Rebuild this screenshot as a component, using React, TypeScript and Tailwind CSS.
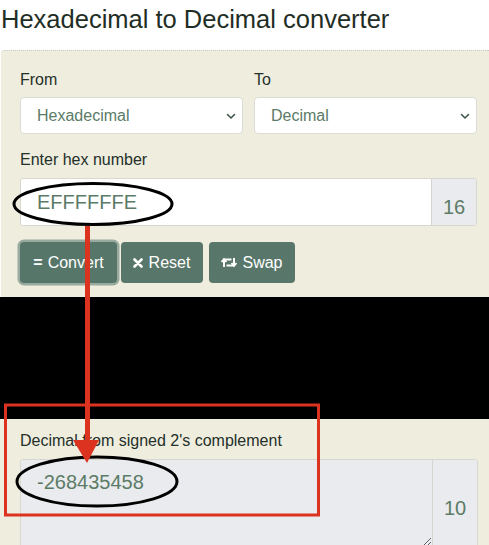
import React from "react";

const font = { fontFamily: '"Liberation Sans", Arial, sans-serif' };

function Chevron() {
  return (
    <svg width="10" height="8" viewBox="0 0 10 8" className="shrink-0">
      <path d="M1.5 2.5 L5 6 L8.5 2.5" fill="none" stroke="#3d5a48" strokeWidth="1.6" strokeLinecap="round" strokeLinejoin="round" />
    </svg>
  );
}

function XIcon() {
  return (
    <svg width="10" height="10" viewBox="0 0 10 10">
      <path d="M1.5 1.5 L8.5 8.5 M8.5 1.5 L1.5 8.5" stroke="white" strokeWidth="2.6" strokeLinecap="round" />
    </svg>
  );
}

function SwapIcon() {
  return (
    <svg width="16" height="11" viewBox="0 0 16 11">
      <path d="M3 10 V2.5 H10.5" fill="none" stroke="white" strokeWidth="2" />
      <path d="M0.5 5 L3 2.2 L5.5 5" fill="none" stroke="white" strokeWidth="1.8" />
      <path d="M13 1 V8.5 H5.5" fill="none" stroke="white" strokeWidth="2" />
      <path d="M10.5 6 L13 8.8 L15.5 6" fill="none" stroke="white" strokeWidth="1.8" />
    </svg>
  );
}

export default function App() {
  return (
    <div className="relative w-[489px] h-[545px] overflow-hidden bg-white" style={font}>
      <h1 className="text-[25.5px] leading-[28px] text-[#1f2e25] pt-[5px] pl-[1px] h-[50px]">
        Hexadecimal to Decimal converter
      </h1>
      <div className="bg-[#efedde] border-t border-dotted border-[#c9c9c0] rounded-tl-[4px] ml-[1px]">
        <div className="pl-[19px] pr-[12px] pt-[17px] pb-[14px]">
          <div className="flex gap-[11px]">
            <div className="w-[223px]">
              <div className="text-[16px] leading-[24px] text-[#24302a] mb-[5px]">From</div>
              <div className="h-[37px] bg-white border border-[#dcdcd6] rounded-[4px] flex items-center justify-between pl-[16px] pr-[6px]">
                <span className="text-[16px] text-[#5b7b67]">Hexadecimal</span>
                <Chevron />
              </div>
            </div>
            <div className="w-[223px]">
              <div className="text-[16px] leading-[24px] text-[#24302a] mb-[5px]">To</div>
              <div className="h-[37px] bg-white border border-[#dcdcd6] rounded-[4px] flex items-center justify-between pl-[16px] pr-[6px]">
                <span className="text-[16px] text-[#5b7b67]">Decimal</span>
                <Chevron />
              </div>
            </div>
          </div>
          <div className="text-[16px] leading-[24px] text-[#24302a] mt-[14px] mb-[6px]">Enter hex number</div>
          <div className="flex w-[457px] h-[48px] border border-[#d8d8d2] rounded-[3px] overflow-hidden">
            <div className="flex-1 bg-white flex items-center pl-[16px] text-[20px] text-[#5b7b67]">EFFFFFFE</div>
            <div className="w-[45px] bg-[#e9ebee] border-l border-[#d6d6d0] flex items-center justify-center pt-[10px] text-[20px] text-[#5b7b67]">
              16
            </div>
          </div>
          <div className="flex items-center mt-[16px]">
            <button className="w-[97px] h-[41px] rounded-[4px] bg-[#57766a] text-white text-[16px] flex items-center justify-center gap-[5px] shadow-[0_0_0_2.5px_#98ab9e]">
              <span className="font-bold leading-none">=</span>Convert
            </button>
            <button className="ml-[4px] w-[82px] h-[41px] rounded-[4px] bg-[#58776a] text-white text-[16px] flex items-center justify-center gap-[6px] pr-[1px]">
              <XIcon />Reset
            </button>
            <button className="ml-[6px] w-[86px] h-[41px] rounded-[4px] bg-[#58776a] text-white text-[16px] flex items-center justify-center gap-[5px]">
              <SwapIcon />Swap
            </button>
          </div>
        </div>
      </div>
      <div className="h-[122px] bg-black" />
      <div className="bg-[#efedde] h-[200px] pl-[20px] pt-[10px]">
        <div className="text-[16px] leading-[24px] text-[#24302a] mb-[6px]">Decimal from signed 2's complement</div>
        <div className="flex w-[458px] h-[88px] border border-[#d8d8d2] rounded-[3px] overflow-hidden">
          <textarea
            readOnly
            value="-268435458"
            className="flex-1 bg-[#e9ebee] pl-[16px] pt-[10px] text-[20px] leading-[24px] text-[#5b7b67] outline-none resize-y"
            style={font}
          />
          <div className="w-[45px] bg-[#e9ebee] border-l border-[#d6d6d0] flex items-center justify-center pt-[10px] text-[20px] text-[#5b7b67]">
            10
          </div>
        </div>
      </div>
      <svg className="absolute inset-0 pointer-events-none" width="489" height="545" viewBox="0 0 489 545">
        <ellipse cx="93" cy="204" rx="79" ry="20.5" fill="none" stroke="black" strokeWidth="3" />
        <ellipse cx="97" cy="481.5" rx="80" ry="24.5" fill="none" stroke="black" strokeWidth="3" />
        <rect x="5.5" y="405" width="313" height="110" fill="none" stroke="#dc3220" strokeWidth="3" />
        <rect x="85" y="226" width="5" height="218" fill="#dc3220" />
        <polygon points="73,440 99,440 87,463" fill="#dc3220" />
      </svg>
    </div>
  );
}
